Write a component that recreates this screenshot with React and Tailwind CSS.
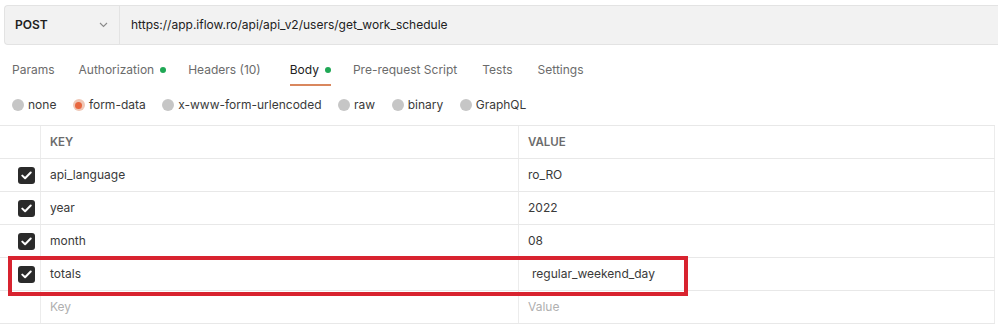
import React from "react";

const font = { fontFamily: "Inter, 'Noto Sans', sans-serif" };

function Dot() {
  return <span className="ml-[6px] inline-block h-[6px] w-[6px] rounded-full bg-[#1fa855]" />;
}

function Check() {
  return (
    <div className="ml-[18px] flex h-[17px] w-[17px] items-center justify-center rounded-[3px] bg-[#2b2b2b]">
      <svg width="11" height="9" viewBox="0 0 11 9" fill="none">
        <path d="M1.3 4.6 L4.1 7.3 L9.7 1.5" stroke="white" strokeWidth="2" strokeLinecap="round" strokeLinejoin="round" />
      </svg>
    </div>
  );
}

function Radio({ label, active }) {
  return (
    <div className="flex items-center">
      {active ? (
        <span className="flex h-[12px] w-[12px] items-center justify-center rounded-full bg-[#efc7b6]">
          <span className="h-[7px] w-[7px] rounded-full bg-[#e8673f]" />
        </span>
      ) : (
        <span className="h-[12px] w-[12px] rounded-full bg-[#c6c6c6]" />
      )}
      <span className="ml-[4px] text-[12px] leading-[16px] text-[#3a3a3a]">{label}</span>
    </div>
  );
}

const rows = [
  { k: "api_language", v: "ro_RO" },
  { k: "year", v: "2022" },
  { k: "month", v: "08" },
  { k: "totals", v: "regular_weekend_day", indent: true },
];

export default function App() {
  return (
    <div className="relative h-[326px] w-[998px] overflow-hidden bg-white" style={font}>
      {/* URL bar */}
      <div className="ml-[4px] mt-[5px] flex h-[40px] border border-r-0 border-[#e3e3e3] bg-[#f2f2f2] rounded-l-[4px]">
        <div className="flex w-[115px] items-center justify-between border-r border-[#e3e3e3] pl-[10px] pr-[11px]">
          <span className="text-[12px] font-semibold text-[#212121]">POST</span>
          <svg width="9" height="6" viewBox="0 0 9 6" fill="none">
            <path d="M1 1 L4.5 4.5 L8 1" stroke="#8a8a8a" strokeWidth="1.1" />
          </svg>
        </div>
        <div className="flex items-center pl-[11px] text-[12px] text-[#212121]">
          https://app.iflow.ro/api/api_v2/users/get_work_schedule
        </div>
      </div>

      {/* Tabs */}
      <div className="flex h-[41px] items-end pl-[12px] text-[12px] leading-[16px] text-[#6b6b6b]">
        <div className="pb-[8px]">Params</div>
        <div className="ml-[24px] flex items-center pb-[8px]">Authorization<Dot /></div>
        <div className="ml-[22px] pb-[8px]">Headers (10)</div>
        <div className="ml-[29px] flex items-center border-b-2 border-[#d9875e] pb-[6px] text-[#212121]">Body<Dot /></div>
        <div className="ml-[22px] pb-[8px]">Pre-request Script</div>
        <div className="ml-[25px] pb-[8px]">Tests</div>
        <div className="ml-[25px] pb-[8px]">Settings</div>
      </div>

      {/* Body type radios */}
      <div className="flex gap-[16.5px] pb-[12px] pl-[12px] pt-[11px]">
        <Radio label="none" />
        <Radio label="form-data" active />
        <Radio label="x-www-form-urlencoded" />
        <Radio label="raw" />
        <Radio label="binary" />
        <Radio label="GraphQL" />
      </div>

      {/* Table */}
      <div className="w-[995px] border-t border-[#e8e8e8]">
        <div className="grid h-[33px] grid-cols-[40px_478px_477px] border-b border-[#e8e8e8]">
          <div />
          <div className="flex items-center border-l border-[#ececec] pl-[9px] pt-[1px] text-[11.5px] font-semibold text-[#6b6b6b]">KEY</div>
          <div className="flex items-center border-l border-r border-[#ececec] pl-[9px] pt-[1px] text-[11.5px] font-semibold text-[#6b6b6b]">VALUE</div>
        </div>
        {rows.map((r) => (
          <div key={r.k} className="grid h-[33px] grid-cols-[40px_478px_477px] border-b border-[#e8e8e8]">
            <div className="flex items-center"><Check /></div>
            <div className="flex items-center border-l border-[#ececec] pl-[9px] text-[12px] text-[#3a3a3a]">{r.k}</div>
            <div className={`flex items-center border-l border-r border-[#ececec] text-[12px] text-[#3a3a3a] ${r.indent ? "pl-[13px]" : "pl-[9px]"}`}>{r.v}</div>
          </div>
        ))}
        <div className="grid h-[33px] grid-cols-[40px_478px_477px] border-b border-[#e8e8e8]">
          <div />
          <div className="flex items-center border-l border-[#ececec] pl-[9px] text-[12px] text-[#b0b0b0]">Key</div>
          <div className="flex items-center border-l border-r border-[#ececec] pl-[9px] text-[12px] text-[#b0b0b0]">Value</div>
        </div>
      </div>

      {/* Red annotation box */}
      <div className="absolute left-[8px] top-[256px] h-[40px] w-[680px] border-[4px] border-[#d8232f]" />
    </div>
  );
}
